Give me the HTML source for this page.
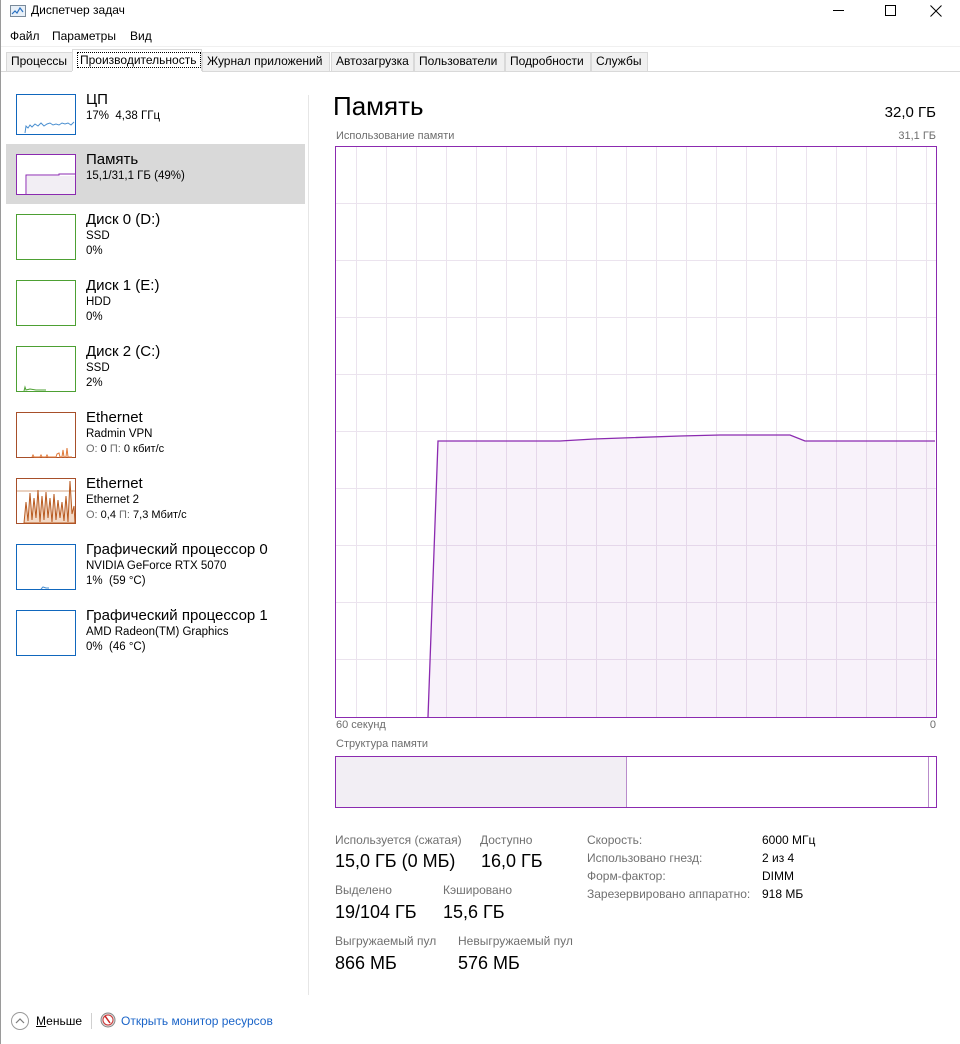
<!DOCTYPE html>
<html><head><meta charset="utf-8">
<style>
*{margin:0;padding:0;box-sizing:border-box}
body{width:960px;height:1044px;background:#fff;font-family:"Segoe UI","Liberation Sans","DejaVu Sans",sans-serif;color:#000;position:relative;overflow:hidden;font-size:12px}
.a{position:absolute;white-space:nowrap}
.tab{position:absolute;top:52px;height:19px;background:#f0f0f0;border:1px solid #d9d9d9;border-bottom:none;font-size:12px;line-height:17px;padding-left:4px}
.t1{font-size:15px}
.t2{font-size:11.5px}
.g{color:#6d6d6d;font-size:11px}
.lab{color:#707070;font-size:12px}
.val{font-size:18px}
.sp{color:#6d6d6d;font-size:12px}
</style></head><body>
<div class="a" style="left:0;top:0;width:1px;height:1044px;background:#9a9a9a"></div>
<svg class="a" style="left:10px;top:4px" width="18" height="14"><rect x="0.5" y="1.5" width="15" height="11" fill="#e8f0f8" stroke="#7a8a9a"/><polyline points="2,10 5,7 7,9 10,4 13,8" fill="none" stroke="#2a70c0" stroke-width="1.2"/></svg>
<div class="a" style="left:31px;top:3px;font-size:12px">Диспетчер задач</div>
<div class="a" style="left:833px;top:10px;width:11px;height:1px;background:#000"></div>
<div class="a" style="left:885px;top:5px;width:11px;height:11px;border:1px solid #000"></div>
<svg class="a" style="left:930px;top:5px" width="12" height="12"><path d="M0.5 0.5L11.5 11.5M11.5 0.5L0.5 11.5" stroke="#000"/></svg>
<div class="a" style="left:10px;top:29px">Файл</div>
<div class="a" style="left:52px;top:29px">Параметры</div>
<div class="a" style="left:130px;top:29px">Вид</div>
<div class="a" style="left:1px;top:46px;width:959px;height:1px;background:#f0f0f0"></div>
<div class="tab" style="left:6px;width:67px">Процессы</div>
<div class="tab" style="left:72px;top:49px;height:23px;width:130px;background:#fff;border-color:#d9d9d9"><div style="margin:2px 0 0 0;border:1px dotted #000;padding:0 2px;height:16px;line-height:14px;width:124px">Производительность</div></div>
<div class="tab" style="left:202px;width:128px">Журнал приложений</div>
<div class="tab" style="left:331px;width:83px">Автозагрузка</div>
<div class="tab" style="left:414px;width:91px">Пользователи</div>
<div class="tab" style="left:505px;width:86px">Подробности</div>
<div class="tab" style="left:591px;width:57px">Службы</div>
<div class="a" style="left:1px;top:71px;width:959px;height:1px;background:#d9d9d9"></div>
<div class="a" style="left:72px;top:71px;width:130px;height:1px;background:#fff"></div>
<div class="a" style="left:6px;top:144px;width:299px;height:60px;background:#d9d9d9"></div>
<div class="a" style="left:308px;top:95px;width:1px;height:900px;background:#e6e6e6"></div>

<svg class="a" style="left:16px;top:94px" width="60" height="41"><rect x="0.5" y="0.5" width="59" height="40" fill="#fff" stroke="#1167bd"/><polyline points="9,39 10,32 12,34 14,31 16,33 19,30 22,32 25,29 28,32 31,30 34,29 37,31 40,30 43,31 46,29 49,30 52,29 55,31 58,28" fill="none" stroke="#4a8fd0"/></svg>
<div class="a t1" style="left:86px;top:91px">ЦП</div>
<div class="a t2" style="left:86px;top:110px">17% &nbsp;4,38 ГГц</div>

<svg class="a" style="left:16px;top:154px" width="60" height="41"><rect x="0.5" y="0.5" width="59" height="40" fill="#fff" stroke="#8b2ab0"/><polyline points="10,40 10,21 43,21 43,20 59,20" fill="none" stroke="#8b2ab0"/><rect x="11" y="22" width="48" height="18" fill="#f2eef4"/></svg>
<div class="a t1" style="left:86px;top:151px">Память</div>
<div class="a t2" style="left:86px;top:170px">15,1/31,1 ГБ (49%)</div>

<svg class="a" style="left:16px;top:214px" width="60" height="47"><rect x="0.5" y="0.5" width="59" height="45" fill="#fff" stroke="#4da033"/></svg>
<div class="a t1" style="left:86px;top:211px">Диск 0 (D:)</div>
<div class="a t2" style="left:86px;top:230px">SSD</div>
<div class="a t2" style="left:86px;top:245px">0%</div>

<svg class="a" style="left:16px;top:280px" width="60" height="47"><rect x="0.5" y="0.5" width="59" height="45" fill="#fff" stroke="#4da033"/></svg>
<div class="a t1" style="left:86px;top:277px">Диск 1 (E:)</div>
<div class="a t2" style="left:86px;top:296px">HDD</div>
<div class="a t2" style="left:86px;top:311px">0%</div>

<svg class="a" style="left:16px;top:346px" width="60" height="47"><rect x="0.5" y="0.5" width="59" height="45" fill="#fff" stroke="#4da033"/><polyline points="8,45 9,41 10,44 14,43 20,44 30,44" fill="none" stroke="#4da033"/></svg>
<div class="a t1" style="left:86px;top:343px">Диск 2 (C:)</div>
<div class="a t2" style="left:86px;top:362px">SSD</div>
<div class="a t2" style="left:86px;top:377px">2%</div>

<svg class="a" style="left:16px;top:412px" width="60" height="47"><rect x="0.5" y="0.5" width="59" height="45" fill="#fff" stroke="#a74f2a"/><polyline points="16,45 17,43 18,45 24,45 25,43 26,45 30,45 31,43 32,45 40,45 41,42 43,41 44,45 46,45 47,38 48,45 50,45 51,36 52,45 56,45" fill="none" stroke="#e07a3a"/></svg>
<div class="a t1" style="left:86px;top:409px">Ethernet</div>
<div class="a t2" style="left:86px;top:428px">Radmin VPN</div>
<div class="a g" style="left:86px;top:443px">О: <span style="color:#000">0</span> П: <span style="color:#000">0 кбит/с</span></div>

<svg class="a" style="left:16px;top:478px" width="60" height="47"><rect x="0.5" y="0.5" width="59" height="45" fill="#fff" stroke="#a74f2a"/><line x1="1" y1="13" x2="59" y2="13" stroke="#c8875a" stroke-width="0.8"/><polygon points="8,45 10,24 12,43 14,15 16,42 18,20 20,40 22,12 24,44 26,18 28,42 30,14 32,40 34,20 36,44 38,16 40,42 42,22 44,40 46,24 48,43 50,18 52,44 54,3 56,36 58,28 59,45" fill="#f3d9c6" stroke="#b85a20" stroke-width="1"/></svg>
<div class="a t1" style="left:86px;top:475px">Ethernet</div>
<div class="a t2" style="left:86px;top:494px">Ethernet 2</div>
<div class="a g" style="left:86px;top:509px">О: <span style="color:#000">0,4</span> П: <span style="color:#000">7,3 Мбит/с</span></div>

<svg class="a" style="left:16px;top:544px" width="60" height="47"><rect x="0.5" y="0.5" width="59" height="45" fill="#fff" stroke="#1167bd"/><polyline points="25,45 27,43 30,44 33,44" fill="none" stroke="#4a8fd0"/></svg>
<div class="a t1" style="left:86px;top:541px">Графический процессор 0</div>
<div class="a t2" style="left:86px;top:560px">NVIDIA GeForce RTX 5070</div>
<div class="a t2" style="left:86px;top:575px">1% &nbsp;(59 °C)</div>

<svg class="a" style="left:16px;top:610px" width="60" height="47"><rect x="0.5" y="0.5" width="59" height="45" fill="#fff" stroke="#1167bd"/></svg>
<div class="a t1" style="left:86px;top:607px">Графический процессор 1</div>
<div class="a t2" style="left:86px;top:626px">AMD Radeon(TM) Graphics</div>
<div class="a t2" style="left:86px;top:641px">0% &nbsp;(46 °C)</div>

<div class="a" style="left:333px;top:91px;font-size:26px">Память</div>
<div class="a" style="right:24px;top:104px;font-size:15px">32,0 ГБ</div>
<div class="a sp" style="left:336px;top:130px;font-size:11px">Использование памяти</div>
<div class="a sp" style="right:24px;top:130px;font-size:11px">31,1 ГБ</div>
<svg class="a" style="left:335px;top:146px" width="602" height="572">
<g stroke="#ebe3ee" stroke-width="1">
<path d="M21.5 0V572M51.5 0V572M81.5 0V572M111.5 0V572M141.5 0V572M171.5 0V572M201.5 0V572M231.5 0V572M261.5 0V572M291.5 0V572M321.5 0V572M351.5 0V572M381.5 0V572M411.5 0V572M441.5 0V572M471.5 0V572M501.5 0V572M531.5 0V572M561.5 0V572M591.5 0V572"/>
<path d="M0 57.5H602M0 114.5H602M0 171.5H602M0 228.5H602M0 285.5H602M0 342.5H602M0 399.5H602M0 456.5H602M0 513.5H602"/>
</g>
<polygon points="93,571 103,295 225,295 259,293 345,290 385,289 455,289 470,295 600,295 600,571" fill="#8b2ab0" fill-opacity="0.06"/>
<polyline points="93,571 103,295 225,295 259,293 345,290 385,289 455,289 470,295 600,295" fill="none" stroke="#8b2ab0" stroke-width="1.3"/>
<rect x="0.5" y="0.5" width="601" height="571" fill="none" stroke="#8b2ab0"/>
</svg>
<div class="a sp" style="left:336px;top:719px;font-size:11px">60 секунд</div>
<div class="a sp" style="right:24px;top:719px;font-size:11px">0</div>
<div class="a sp" style="left:336px;top:738px;font-size:11px">Структура памяти</div>
<svg class="a" style="left:335px;top:756px" width="602" height="52"><rect x="1" y="1" width="291" height="50" fill="#f2eef4"/><line x1="291.5" y1="0" x2="291.5" y2="52" stroke="#b98ccb"/><line x1="593.5" y1="0" x2="593.5" y2="52" stroke="#b98ccb"/><rect x="0.5" y="0.5" width="601" height="51" fill="none" stroke="#8b2ab0"/></svg>

<div class="a lab" style="left:335px;top:833px">Используется (сжатая)</div>
<div class="a val" style="left:335px;top:851px">15,0 ГБ (0 МБ)</div>
<div class="a lab" style="left:480px;top:833px">Доступно</div>
<div class="a val" style="left:481px;top:851px">16,0 ГБ</div>
<div class="a lab" style="left:335px;top:883px">Выделено</div>
<div class="a val" style="left:335px;top:902px">19/104 ГБ</div>
<div class="a lab" style="left:443px;top:883px">Кэшировано</div>
<div class="a val" style="left:443px;top:902px">15,6 ГБ</div>
<div class="a lab" style="left:335px;top:934px">Выгружаемый пул</div>
<div class="a val" style="left:335px;top:953px">866 МБ</div>
<div class="a lab" style="left:458px;top:934px">Невыгружаемый пул</div>
<div class="a val" style="left:458px;top:953px">576 МБ</div>

<div class="a lab" style="left:587px;top:833px">Скорость:</div>
<div class="a lab" style="left:587px;top:851px">Использовано гнезд:</div>
<div class="a lab" style="left:587px;top:869px">Форм-фактор:</div>
<div class="a lab" style="left:587px;top:887px">Зарезервировано аппаратно:</div>
<div class="a" style="left:762px;top:833px">6000 МГц</div>
<div class="a" style="left:762px;top:851px">2 из 4</div>
<div class="a" style="left:762px;top:869px">DIMM</div>
<div class="a" style="left:762px;top:887px">918 МБ</div>

<svg class="a" style="left:10px;top:1011px" width="20" height="20"><circle cx="10" cy="10" r="8.5" fill="#fff" stroke="#9a9a9a"/><polyline points="6,12 10,8 14,12" fill="none" stroke="#7a7a7a" stroke-width="1.2"/></svg>
<div class="a" style="left:36px;top:1014px;font-size:12px"><u>М</u>еньше</div>
<div class="a" style="left:91px;top:1013px;width:1px;height:16px;background:#d0d0d0"></div>
<svg class="a" style="left:100px;top:1012px" width="16" height="16"><circle cx="8" cy="8" r="7" fill="#ddd" stroke="#888"/><circle cx="8" cy="8" r="5" fill="#fff" stroke="#c33"/><line x1="5" y1="4" x2="10" y2="11" stroke="#c22" stroke-width="1.5"/></svg>
<div class="a" style="left:121px;top:1014px;font-size:12px;color:#1a64c8">Открыть монитор ресурсов</div>
</body></html>
